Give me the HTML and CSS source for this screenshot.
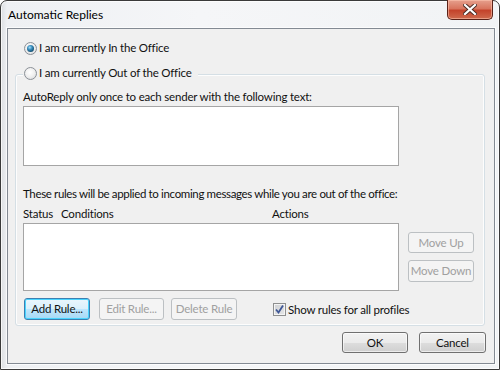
FILE: index.html
```html
<!DOCTYPE html>
<html>
<head>
<meta charset="utf-8">
<link rel="stylesheet" href="styles.css">
</head>
<body>
<div class="window">
  <div class="titlebar">
    <span class="title">Automatic Replies</span>
    <button class="close" aria-label="Close">
      <svg width="14" height="11" viewBox="0 0 14 11"><path d="M2 1 L12 10 M12 1 L2 10" stroke="#4a2a22" stroke-width="4" stroke-linecap="square"/><path d="M2 1 L12 10 M12 1 L2 10" stroke="#fff" stroke-width="2.2" stroke-linecap="square"/></svg>
    </button>
  </div>
  <div class="client">
    <label class="radio-row first">
      <span class="radio checked"></span>
      <span class="label">I am currently In the Office</span>
    </label>
    <div class="group">
      <label class="radio-row legend">
        <span class="radio"></span>
        <span class="label">I am currently Out of the Office</span>
      </label>
      <div class="line autoreply">AutoReply only once to each sender with the following text:</div>
      <div class="textbox"></div>
      <div class="line rules-note">These rules will be applied to incoming messages while you are out of the office:</div>
      <div class="columns">
        <span class="col-status">Status</span>
        <span class="col-cond">Conditions</span>
        <span class="col-actions">Actions</span>
      </div>
      <div class="rules-row">
        <div class="listbox"></div>
        <div class="side-buttons">
          <button class="btn disabled move-up">Move Up</button>
          <button class="btn disabled move-down">Move Down</button>
        </div>
      </div>
      <div class="actions-row">
        <button class="btn default add">Add Rule...</button>
        <button class="btn disabled edit">Edit Rule...</button>
        <button class="btn disabled delete">Delete Rule</button>
        <label class="check-row">
          <span class="checkbox">
            <svg width="11" height="11" viewBox="0 0 11 11"><path d="M2 5.5 L4.5 8.5 L9 1.5" fill="none" stroke="#3f5796" stroke-width="1.8"/></svg>
          </span>
          <span class="label">Show rules for all profiles</span>
        </label>
      </div>
    </div>
    <div class="dialog-buttons">
      <button class="btn ok">OK</button>
      <button class="btn cancel">Cancel</button>
    </div>
  </div>
</div>
</body>
</html>
```
FILE: styles.css
```css
* { box-sizing: border-box; }
html, body { margin: 0; padding: 0; }
body {
  width: 501px;
  height: 370px;
  background: #fff;
  font-family: Lato, "Noto Sans", sans-serif;
  font-size: 11.5px;
  letter-spacing: -0.2px;
  color: #111;
  overflow: hidden;
}
.window {
  width: 500px;
  height: 370px;
  border: 1px solid #3a3a3a;
  border-radius: 7px 7px 0 0;
  background: linear-gradient(90deg, #dcdfe2 0px, #eef0f3 6px, #f5f6f8 40%, #f1f3f5 100%);
  padding: 0 5px 5px 6px;
  display: flex;
  flex-direction: column;
  box-shadow: inset 0 0 0 1px rgba(255,255,255,0.75);
}
.titlebar {
  height: 27px;
  display: flex;
  align-items: flex-start;
  justify-content: space-between;
  flex: none;
}
.title {
  margin-top: 6px;
  margin-left: 1px;
  font-size: 12px;
  letter-spacing: 0;
  line-height: 16px;
  color: #000;
}
.close {
  width: 46px;
  height: 20px;
  margin-top: -1px;
  margin-right: 1px;
  padding: 0;
  border: 1px solid #5a2218;
  border-top: none;
  border-radius: 0 0 5px 5px;
  background: linear-gradient(#e6a08d 0%, #d8755e 45%, #c4432b 55%, #cf6a4d 100%);
  box-shadow: inset 0 0 0 1px rgba(255,200,180,0.55);
  display: flex;
  align-items: center;
  justify-content: center;
}
.client {
  width: 488px;
  height: 336px;
  border: 1px solid #838a93;
  background: #f0f0f0;
  box-shadow: 0 0 0 1px rgba(255,255,255,0.7);
  padding: 11px 8px 0 7px;
  display: flex;
  flex-direction: column;
}
.radio-row {
  display: flex;
  align-items: center;
  height: 16px;
  line-height: 16px;
}
.radio-row.first { margin-left: 9px; }
.radio {
  width: 13px;
  height: 13px;
  border-radius: 50%;
  border: 1px solid #8b9097;
  background: radial-gradient(circle at 45% 40%, #ffffff 0%, #f1f1f1 45%, #d4d6d8 100%);
  margin-right: 2px;
  display: flex;
  align-items: center;
  justify-content: center;
  flex: none;
}
.radio.checked::after {
  content: "";
  width: 7px;
  height: 7px;
  border-radius: 50%;
  background: radial-gradient(circle at 40% 35%, #a9e0f7 0%, #3a8fc0 35%, #175477 70%, #0e3a56 100%);
}
.group {
  margin-top: 18px;
  width: 470px;
  border: 1px solid #d5dfe5;
  border-radius: 3px;
  box-shadow: inset 0 0 0 1px #fdfdfd;
  padding: 0 0 5px 7px;
  display: flex;
  flex-direction: column;
}
.legend {
  margin-top: -10px;
  align-self: flex-start;
  background: #f0f0f0;
  padding: 0 6px 0 1px;
  margin-left: 0;
}
.line { height: 15px; line-height: 15px; white-space: nowrap; }
.autoreply { margin-top: 8px; }
.textbox {
  margin-top: 2px;
  width: 376px;
  height: 60px;
  background: #fff;
  border: 1px solid #a5a5a5;
}
.rules-note { margin-top: 20px; letter-spacing: -0.35px; }
.columns {
  margin-top: 5px;
  height: 15px;
  line-height: 15px;
  display: flex;
  white-space: nowrap;
}
.col-status { width: 38px; }
.col-cond { width: 211px; }
.rules-row {
  margin-top: 2px;
  display: flex;
  align-items: flex-start;
}
.listbox {
  width: 376px;
  height: 68px;
  background: #fff;
  border: 1px solid #a5a5a5;
}
.side-buttons {
  margin-left: 9px;
  margin-top: 9px;
  display: flex;
  flex-direction: column;
  gap: 7px;
}
.btn {
  width: 66px;
  height: 21px;
  padding: 0;
  font: inherit;
  letter-spacing: inherit;
  color: #111;
  border: 1px solid #707070;
  border-radius: 3px;
  background: linear-gradient(#f2f2f2 0%, #ebebeb 50%, #dddddd 51%, #cfcfcf 100%);
  box-shadow: inset 0 0 0 1px rgba(255,255,255,0.6);
  line-height: 18px;
  text-align: center;
  white-space: nowrap;
}
.btn.disabled {
  color: #a0a0a0;
  border-color: #bcc0c3;
  background: #f4f4f4;
  box-shadow: none;
}
.move-down { height: 22px; }
.actions-row {
  margin-top: 7px;
  display: flex;
  align-items: center;
  height: 22px;
}
.btn.default {
  height: 22px;
  margin-left: 1px;
  border-color: #3c7fb1;
  background: linear-gradient(#eaf6fd 0%, #d9f0fc 50%, #bee6fd 51%, #a7d9f5 100%);
  box-shadow: inset 0 0 0 1px #48d4fe;
}
.btn.edit { height: 22px; width: 65px; margin-left: 9px; }
.btn.delete { height: 22px; margin-left: 7px; }
.check-row {
  margin-left: 36px;
  display: flex;
  align-items: center;
  height: 16px;
}
.checkbox {
  width: 13px;
  height: 13px;
  border: 1px solid #8e8f8f;
  background: linear-gradient(135deg, #cfd1d4 0%, #e6e7e8 100%);
  box-shadow: inset 0 0 0 1px #f4f4f4;
  display: flex;
  align-items: center;
  justify-content: center;
  margin-right: 2px;
  flex: none;
}
.dialog-buttons {
  margin-top: 6px;
  display: flex;
  justify-content: flex-end;
  gap: 11px;
}
.btn.ok { width: 66px; }
.btn.cancel { width: 67px; }
```
